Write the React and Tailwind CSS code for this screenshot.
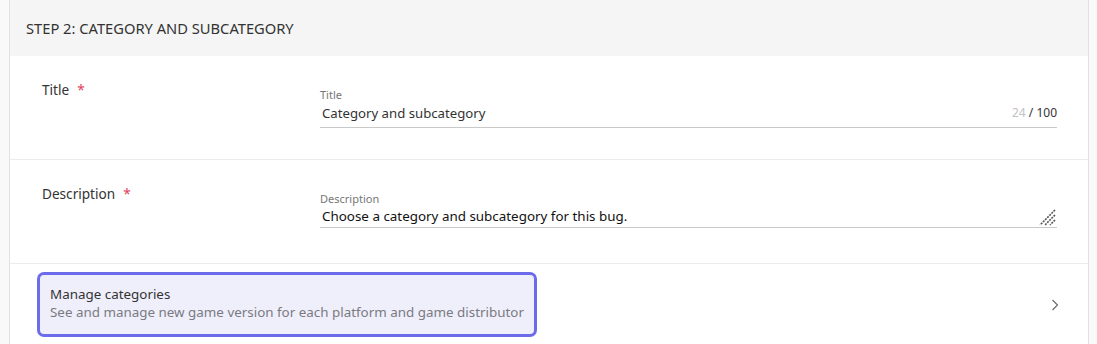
import React from 'react';

const font = { fontFamily: '"Noto Sans", "Open Sans", sans-serif' };

const Required = () => <span className="ml-[8px] text-[#e0435a]">*</span>;

const ResizeHandle = () => (
  <svg width="18" height="18" viewBox="0 0 18 18" className="absolute right-[1px] bottom-[1px]">
    <path d="M17 2 L2 17 M17 7 L7 17 M17 12 L12 17" stroke="#555" strokeWidth="1.6" strokeDasharray="2 1" fill="none" />
  </svg>
);

const FieldRow = ({ label, children }) => (
  <div className="flex h-[104px] border-b border-[#ececec] pl-[32px] pr-[31px] pt-[24px]">
    <div className="w-[278px] shrink-0 text-[13.6px] leading-[20px] text-[#333]">
      {label}
      <Required />
    </div>
    <div className="flex-1 pt-[8px]">{children}</div>
  </div>
);

export default function App() {
  return (
    <div className="min-h-screen bg-[#f9f9f9] pl-[9px] pr-[8px]" style={font}>
      <div className="min-h-[344px] border-x border-[#e2e2e2] bg-white">
        {/* Header */}
        <div className="flex h-[56px] items-center bg-[#f5f5f5] px-[16px] text-[14.7px] text-[#333]">
          STEP 2: CATEGORY AND SUBCATEGORY
        </div>

        <FieldRow label="Title">
          <div className="text-[11px] leading-[14px] text-[#777]">Title</div>
          <div className="flex items-center border-b border-[#c9c9c9] pb-[4px] pt-[1px]">
            <div className="flex-1 pl-[2px] text-[13.2px] leading-[20px] text-[#333]">Category and subcategory</div>
            <div className="text-[12px] leading-[20px] text-[#333]">
              <span className="text-[#c2c2c2]">24</span> / 100
            </div>
          </div>
        </FieldRow>

        <FieldRow label="Description">
          <div className="text-[11px] leading-[14px] text-[#777]">Description</div>
          <div className="relative h-[22px] border-b border-[#c9c9c9]">
            <div className="pl-[2px] text-[13.4px] leading-[20px] text-[#111]">
              Choose a category and subcategory for this bug.
            </div>
            <ResizeHandle />
          </div>
        </FieldRow>

        {/* Manage categories */}
        <div className="flex items-center pl-[27px] pr-[29px] pt-[8px]">
          <div className="w-[500px] rounded-[7px] border-[3px] border-[#6b6bec] bg-[#efeffc] px-[10px] pb-[13px] pt-[10px]">
            <div className="text-[13.4px] leading-[18px] text-[#333]">Manage categories</div>
            <div className="whitespace-nowrap text-[13.4px] leading-[18px] text-[#7a7a80]">
              See and manage new game version for each platform and game distributor
            </div>
          </div>
          <div className="flex-1" />
          <svg width="8" height="12" viewBox="0 0 8 12">
            <path d="M1.5 1 L6.5 6 L1.5 11" stroke="#666" strokeWidth="1.1" fill="none" />
          </svg>
        </div>
      </div>
    </div>
  );
}
